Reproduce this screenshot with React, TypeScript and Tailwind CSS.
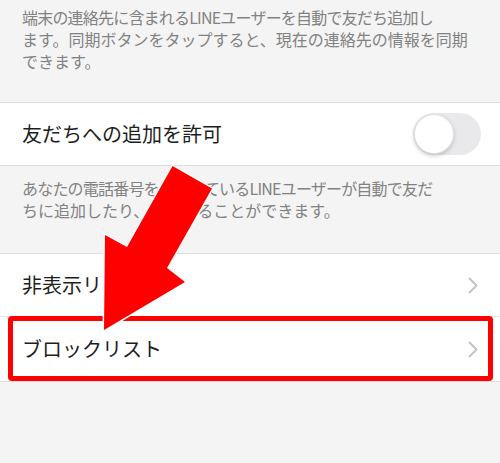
import React from "react";

const Chevron = () => (
  <svg width="10" height="17" viewBox="0 0 10 17" fill="none">
    <polyline points="1.5,1.5 8.5,8.5 1.5,15.5" stroke="#c4c4c8" strokeWidth="2" strokeLinecap="round" strokeLinejoin="round" />
  </svg>
);

export default function App() {
  return (
    <div
      className="relative w-[500px] h-[463px] overflow-hidden bg-[#f4f4f4]"
      style={{ fontFamily: '"Noto Sans CJK JP", "Noto Sans", sans-serif' }}
    >
      <div className="pl-[22px] pr-2 pt-[6px] pb-[30px] text-[16px] leading-[22px] text-[#828282] whitespace-nowrap">
        <span className="tracking-[-0.8px]">端末の連絡先に含まれるLINEユーザーを自動で友だち追加し</span>
        <br />
        ます。同期ボタンをタップすると、現在の連絡先の情報を同期
        <br />
        できます。
      </div>

      <div className="h-[64px] bg-white border-y border-[#dedede] flex items-center justify-between pl-[22px] pr-[19px]">
        <span className="text-[20px] text-[#1e1e1e]">友だちへの追加を許可</span>
        <div className="w-[68px] h-[42px] rounded-full bg-[#e9e9eb] flex items-center pl-[1px]">
          <div className="w-[40px] h-[40px] rounded-full bg-white border border-[#e2e2e2] shadow-[0_2px_4px_rgba(0,0,0,0.18)]" />
        </div>
      </div>

      <div className="pl-[22px] pr-2 pt-[11px] pb-[32px] text-[16px] leading-[22px] text-[#828282] whitespace-nowrap">
        <span className="tracking-[-0.8px]">あなたの電話番号を保有しているLINEユーザーが自動で友だ</span>
        <br />
        ちに追加したり、検索することができます。
      </div>

      <div className="bg-white border-y border-[#dedede]">
        <div className="h-[62px] flex items-center justify-between pl-[22px] pr-[22px]">
          <span className="text-[20px] text-[#1e1e1e]">非表示リスト</span>
          <Chevron />
        </div>
        <div className="h-px bg-[#e4e4e4]" />
        <div className="h-[64px] flex items-center justify-between pl-[22px] pr-[22px]">
          <span className="text-[20px] text-[#1e1e1e]">ブロックリスト</span>
          <Chevron />
        </div>
      </div>

      <div className="absolute left-[8px] top-[316px] w-[485px] h-[65px] border-[5px] border-[#ff0000] rounded-[4px]" />

      <svg className="absolute left-0 top-0" width="500" height="463" viewBox="0 0 500 463">
        <polygon
          points="104,330 105,235 127,247 172.5,166 212,188.5 167,268 185,282"
          fill="#ff0000"
          stroke="#ffffff"
          strokeWidth="3"
          strokeLinejoin="miter"
          style={{ paintOrder: "stroke" }}
        />
      </svg>
    </div>
  );
}
